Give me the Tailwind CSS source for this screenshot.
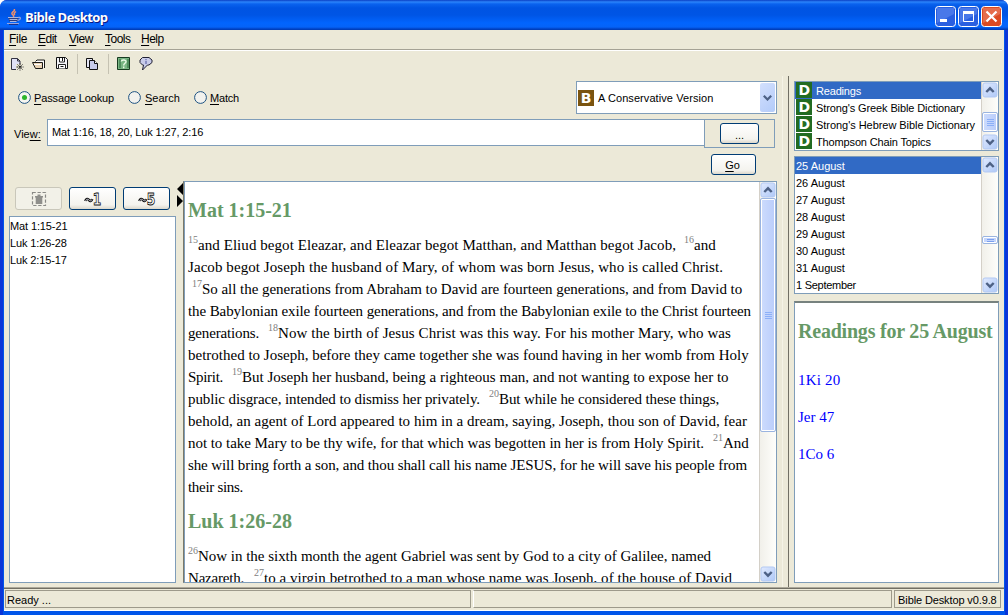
<!DOCTYPE html>
<html lang="en">
<head>
<meta charset="utf-8">
<title>Bible Desktop</title>
<script src="https://cdn.jsdelivr.net/npm/@tailwindcss/browser@4"></script>
</head>
<body class="w-[1008px] h-[615px] overflow-hidden bg-white text-black font-['Liberation_Sans',sans-serif] text-[11px] leading-[17px] whitespace-nowrap">
<svg class="absolute w-0 h-0">
  <defs>
    <linearGradient id="sb" x1="0" y1="0" x2="1" y2="1"><stop offset="0" stop-color="#e1eafe"/><stop offset="1" stop-color="#aec8f7"/></linearGradient>
    <symbol id="up" viewBox="0 0 16 16"><rect x="1" y="1" width="14" height="14" rx="2" fill="url(#sb)" stroke="#b3c9f3"/><path d="M4.300 10 8 6.300 11.700 10" fill="none" stroke="#4d6185" stroke-width="2.400"/></symbol>
    <symbol id="down" viewBox="0 0 16 16"><rect x="1" y="1" width="14" height="14" rx="2" fill="url(#sb)" stroke="#b3c9f3"/><path d="M4.300 6 8 9.700 11.700 6" fill="none" stroke="#4d6185" stroke-width="2.400"/></symbol>
    <symbol id="dict" viewBox="0 0 16 16"><path d="M0 0h16v16H0z" fill="#226b22"/><text x="8.300" y="13" text-anchor="middle" font-family="DejaVu Sans" font-weight="bold" font-size="14" fill="#fff">D</text></symbol>
  </defs>
</svg>
<div class="flex flex-col w-[1008px] h-[615px] rounded-t-[7px] overflow-hidden bg-[#0831d9]">
  <!-- title bar -->
  <header class="flex items-center shrink-0 h-[30px] pl-[6px] pr-[6px] bg-[linear-gradient(to_bottom,#0a3fc4_0,#2b84fb_2px,#0a62ee_4px,#0054e3_8px,#0055e5_15px,#0265fe_23px,#0563f8_27px,#0042c4_29px,#003ab0_30px)]">
    <svg class="w-4 h-4 mt-[3px]" viewBox="0 0 16 16" fill="none">
      <path d="M8 0c2 2-3 3-2 5 .5 1 2 1 1.500 3M10 2.500C8 4 7.500 5 9 6" stroke="#f0906a" stroke-width="1.500"/>
      <path d="M2 8h10.500l-1 4.500H3.500z" fill="#2c3c80"/>
      <path d="M2 8.500h10M3.500 10.500h8M4 12.500h6.500" stroke="#b9c3e8" stroke-width=".9"/>
      <path d="M12 8.500c3-1 3.500 2-.5 3M1 14.500h12" stroke="#97a3dc" stroke-width="1.200"/>
      <path d="M3 15.500h9" stroke="#1a2f88"/>
    </svg>
    <span class="ml-[3px] mt-[4px] font-bold text-[13px] leading-4 text-white font-['Open_Sans',sans-serif] tracking-[-0.56px] [text-shadow:1px_1px_0_#0a1883]">Bible Desktop</span>
    <div class="flex gap-[2px] ml-auto mt-[3px]">
      <svg class="w-[21px] h-[21px]" viewBox="0 0 21 21"><rect x=".5" y=".5" width="20" height="20" rx="3" fill="#2a5fe0" stroke="#fff"/><path d="M2 2h17v6L2 17z" fill="#6e97f3" opacity=".45"/><path d="M5 13h7v3H5z" fill="#fff"/></svg>
      <svg class="w-[21px] h-[21px]" viewBox="0 0 21 21"><rect x=".5" y=".5" width="20" height="20" rx="3" fill="#2a5fe0" stroke="#fff"/><path d="M2 2h17v6L2 17z" fill="#6e97f3" opacity=".45"/><path d="M5.500 6.500h10v9h-10z" fill="none" stroke="#fff"/><path d="M5 5h11v3H5z" fill="#fff"/></svg>
      <svg class="w-[21px] h-[21px]" viewBox="0 0 21 21"><rect x=".5" y=".5" width="20" height="20" rx="3" fill="#dc4a22" stroke="#fff"/><path d="M2 2h17v6L2 17z" fill="#f09a80" opacity=".45"/><path d="m5.500 5.500 10 10m0-10-10 10" stroke="#fff" stroke-width="2.200"/></svg>
    </div>
  </header>

  <div class="flex grow min-h-0 pl-px pr-px border-x-[3px] border-[#0a35d8] bg-[#0055ea]">
    <main class="flex flex-col w-full h-[581px] bg-[#ece9d8]">
      <!-- menu -->
      <nav class="flex shrink-0 h-[19px] items-center pl-[5px] text-[12px] tracking-[-0.5px]">
        <span class="w-[29px] tracking-[-0.3px]"><u class="underline-offset-2">F</u>ile</span><span class="w-[31px]"><u class="underline-offset-2">E</u>dit</span><span class="w-[36px]"><u class="underline-offset-2">V</u>iew</span><span class="w-[36px]"><u class="underline-offset-2">T</u>ools</span><span><u class="underline-offset-2">H</u>elp</span>
      </nav>
      <div class="shrink-0 h-[2px] border-t border-[#a5a295] bg-white mr-[2px]"></div>
      <!-- toolbar -->
      <div class="flex shrink-0 h-[25px] items-center pl-[5px]">
        <svg class="w-4 h-4" viewBox="0 0 16 16"><path d="M2.500 2.500h6l2.500 2.500v8.500H2.500z" fill="#dfe0f6" stroke="#333342"/><path d="M8.500 2.500V5H11" fill="none" stroke="#333342"/><path d="M7 8h8v7H7z" fill="#ece9d8"/><path d="M11 7.500v7M7.500 11h7M8.500 8.500l5 5m0-5-5 5" stroke="#222" stroke-dasharray="1.500 .6"/></svg>
        <svg class="ml-[6px] w-4 h-4" viewBox="0 0 16 16"><path d="M4.500 5.500 6 4h7.500v8" fill="#fff" stroke="#1b1b18"/><path d="M1.500 6.500h10v6H4.500z" fill="#e9d3b4" stroke="#1b1b18"/><path d="M3 8.500h7" stroke="#fff"/></svg>
        <svg class="ml-[7px] w-4 h-4" viewBox="0 0 16 16"><path d="M2.500 1.500h9l2 2v9h-11z" fill="#f4f4f8" stroke="#111"/><path d="M5.500 2v4h5V2M4.500 12.500v-4h7v4" fill="#fff" stroke="#222"/><path d="M8.500 2v3M6.500 10.500h3" stroke="#111"/></svg>
        <div class="ml-[7px] w-px h-5 bg-[#c5c2b2]"></div>
        <svg class="ml-[6px] w-4 h-4" viewBox="0 0 16 16"><path d="M2.500 2.500h6v9h-6z" fill="#e4e5f4" stroke="#111"/><path d="M5.500 4.500h5l3 3v6h-8z" fill="#c7cbea" stroke="#111"/><path d="M10.500 4.500v3h3" fill="#fff" stroke="#111"/></svg>
        <div class="ml-[8px] w-px h-5 bg-[#c5c2b2]"></div>
        <svg class="ml-[7px] w-4 h-4" viewBox="0 0 16 16"><path d="M1.500 1.500h12v12h-12z" fill="#79b583" stroke="#173c20"/><path d="M3 3h2v9H3zM11 3h2v9h-2z" fill="#4f8d5d"/><path d="M5.300 5.500c.2-2 4.900-2 4.700.3C9.900 7.300 7.700 7.500 7.700 9.500M7.700 10.500v1.800" fill="none" stroke="#e9f9e6" stroke-width="1.400"/></svg>
        <svg class="ml-[6px] w-4 h-4" viewBox="0 0 16 16"><path d="M4.500 1.500h6.500l3 2.500v2.500l-3 2.500H9.500L4.500 14l1-5h-1L2 6.500V4z" fill="#c8cbe9" stroke="#202033"/><path d="M8 3v1.200M8 5v3" stroke="#5e65a8" stroke-width="1.200"/></svg>
      </div>

      <div class="flex grow min-h-0">
        <!-- left half -->
        <section class="flex flex-col w-[776px] shrink-0">
          <div class="flex h-[43px] pt-[5px] pl-[14px] shrink-0">
            <div class="flex items-center h-[33px] grow">
              <svg class="w-[13px] h-[13px]" viewBox="0 0 13 13"><circle cx="6.500" cy="6.500" r="5.900" fill="#f6f6f1" stroke="#1d5281"/><circle cx="6.500" cy="6.500" r="2.500" fill="#2db52b"/></svg>
              <span class="ml-[3px] w-[94px] pt-px tracking-[-0.14px]"><u class="underline-offset-2">P</u>assage Lookup</span>
              <svg class="w-[13px] h-[13px]" viewBox="0 0 13 13"><circle cx="6.500" cy="6.500" r="5.900" fill="#f2f2ee" stroke="#1d5281"/></svg>
              <span class="ml-[4px] w-[49px] pt-px"><u class="underline-offset-2">S</u>earch</span>
              <svg class="w-[13px] h-[13px]" viewBox="0 0 13 13"><circle cx="6.500" cy="6.500" r="5.900" fill="#f2f2ee" stroke="#1d5281"/></svg>
              <span class="ml-[3px] pt-px tracking-[-0.19px]"><u class="underline-offset-2">M</u>atch</span>
            </div>
            <div class="flex items-center w-[201px] h-[33px] mr-[3px] border border-[#7f9db9] bg-white pl-px pr-px">
              <svg class="w-4 h-4" viewBox="0 0 16 16"><path d="M0 0h16v16H0z" fill="#7a5410"/><text x="8" y="13" text-anchor="middle" font-family="DejaVu Sans" font-weight="bold" font-size="14" fill="#fff">B</text></svg>
              <span class="ml-[4px] pt-px tracking-[0.076px]">A Conservative Version</span>
              <div class="flex items-center justify-center ml-auto w-[15px] h-[29px] rounded-[2px] bg-[linear-gradient(135deg,#d3e0fd,#b3cbf9)]"><svg class="w-[9px] h-[6px]" viewBox="0 0 9 6"><path d="M.8.8 4.500 4.500 8.200.8" fill="none" stroke="#4d6185" stroke-width="2.200"/></svg></div>
            </div>
          </div>
          <div class="flex h-[33px] shrink-0 pl-[10px]">
            <span class="w-[33px] pt-[7px]">Vie<u class="underline-offset-2">w:</u></span>
            <div class="w-[658px] h-[27px] border border-[#7f9db9] bg-white pl-[4px] pt-[4px] tracking-[-0.13px]">Mat 1:16, 18, 20, Luk 1:27, 2:16</div>
            <div class="-ml-px w-[71px] h-[29px] border border-[#7f9db9] pl-[15px] pt-[3px]">
              <div class="w-[39px] h-[21px] rounded-[3px] border border-[#003c74] bg-[linear-gradient(#fff,#f4f3ee_80%,#dcd8cc)] text-center leading-[22px]">...</div>
            </div>
          </div>
          <div class="h-[29px] shrink-0 pl-[707px] pt-[2px]">
            <div class="w-[45px] h-[21px] rounded-[3px] border border-[#003c74] bg-[linear-gradient(#fff,#f4f3ee_80%,#dcd8cc)] text-center leading-[21px] pr-[2px]"><u class="underline-offset-2">G</u>o</div>
          </div>
          <div class="flex h-[402px] shrink-0">
            <!-- passage list -->
            <div class="flex flex-col w-[172px] pl-[5px]">
              <div class="flex gap-[7px] h-[35px] pl-[6px] pt-[6px]">
                <div class="flex items-center justify-center w-[47px] h-[23px] rounded-[3px] border border-[#c9c7ba] bg-[#f2f1e8]"><svg class="w-4 h-4" viewBox="0 0 16 16"><path d="M1.500 1.500h13v13h-13z" fill="none" stroke="#8a8a86" stroke-width="1.200" stroke-dasharray="3.300 1.700"/><path d="M4 5h8v1.500h-.7V13H4.700V6.500H4zM6.500 3.500h3V5h-3z" fill="#8f8f8b"/></svg></div>
                <div class="flex items-center justify-center w-[47px] h-[23px] rounded-[3px] border border-[#003c74] bg-[linear-gradient(#fff,#f4f3ee_80%,#dcd8cc)]"><svg class="w-[18px] h-4" viewBox="0 0 18 16"><path d="M1.300 10C2 7.500 4 7.500 5 9s2.500 1.500 3.200-1" fill="none" stroke="#111" stroke-width="2.600"/><path d="M1.500 9.800C2.500 7.800 4 8 5 9s2.300 1.300 3-.5" fill="none" stroke="#e5e5f5" stroke-width=".8"/><text x="8.700" y="14" font-family="DejaVu Sans" font-weight="bold" font-size="16" textLength="8.500" lengthAdjust="spacingAndGlyphs" fill="#fff" stroke="#111" stroke-width=".9">1</text></svg></div>
                <div class="flex items-center justify-center w-[47px] h-[23px] rounded-[3px] border border-[#003c74] bg-[linear-gradient(#fff,#f4f3ee_80%,#dcd8cc)]"><svg class="w-[18px] h-4" viewBox="0 0 18 16"><path d="M1.300 10C2 7.500 4 7.500 5 9s2.500 1.500 3.200-1" fill="none" stroke="#111" stroke-width="2.600"/><path d="M1.500 9.800C2.500 7.800 4 8 5 9s2.300 1.300 3-.5" fill="none" stroke="#e5e5f5" stroke-width=".8"/><text x="8.700" y="14" font-family="DejaVu Sans" font-weight="bold" font-size="16" textLength="8.500" lengthAdjust="spacingAndGlyphs" fill="#fff" stroke="#111" stroke-width=".9">5</text></svg></div>
              </div>
              <div class="w-[167px] h-[367px] border border-[#7f9db9] bg-white pt-px tracking-[-0.12px]"><div>Mat 1:15-21</div><div>Luk 1:26-28</div><div>Luk 2:15-17</div></div>
            </div>
            <div class="w-[7px] pt-[2px]"><svg class="w-[7px] h-6" viewBox="0 0 7 24"><path d="M7 0v12L1 6zM1 12v12l6-6z"/></svg></div>
            <!-- passage text -->
            <div class="flex w-[594px] border border-[#7f9db9] border-l-[#7a7868] bg-white overflow-hidden">
              <div class="w-px bg-[#7f9db9]"></div>
              <article class="w-[574px] h-[400px] shrink-0 pl-[3px] font-['Liberation_Serif',serif] text-[15px] leading-[22px] overflow-hidden">
                <h2 class="mt-4 h-9 font-bold text-[20px] leading-6 text-[#669966]">Mat 1:15-21</h2>
                <div class="flex h-[22px]"><span class="w-[10px] text-[10px] leading-[11px] text-[#808080]">15</span><span class="w-[486px] tracking-[0.061px]">and Eliud begot Eleazar, and Eleazar begot Matthan, and Matthan begot Jacob,</span><span class="w-[10px] text-[10px] leading-[11px] text-[#808080]">16</span><span>and</span></div>
                <div class="h-[22px] tracking-[0.071px]">Jacob begot Joseph the husband of Mary, of whom was born Jesus, who is called Christ.</div>
                <div class="flex h-[22px] pl-[4px]"><span class="w-[10px] text-[10px] leading-[11px] text-[#808080]">17</span><span class="tracking-[-0.039px]">So all the generations from Abraham to David are fourteen generations, and from David to</span></div>
                <div class="h-[22px] tracking-[-0.098px]">the Babylonian exile fourteen generations, and from the Babylonian exile to the Christ fourteen</div>
                <div class="flex h-[22px]"><span class="w-[80px] tracking-[-0.158px]">generations.</span><span class="w-[10px] text-[10px] leading-[11px] text-[#808080]">18</span><span class="tracking-[0.081px]">Now the birth of Jesus Christ was this way. For his mother Mary, who was</span></div>
                <div class="h-[22px]">betrothed to Joseph, before they came together she was found having in her womb from Holy</div>
                <div class="flex h-[22px]"><span class="w-[44px] tracking-[-0.3px]">Spirit.</span><span class="w-[10px] text-[10px] leading-[11px] text-[#808080]">19</span><span>But Joseph her husband, being a righteous man, and not wanting to expose her to</span></div>
                <div class="flex h-[22px]"><span class="w-[301px] tracking-[-0.104px]">public disgrace, intended to dismiss her privately.</span><span class="w-[10px] text-[10px] leading-[11px] text-[#808080]">20</span><span class="tracking-[-0.111px]">But while he considered these things,</span></div>
                <div class="h-[22px] tracking-[0.027px]">behold, an agent of Lord appeared to him in a dream, saying, Joseph, thou son of David, fear</div>
                <div class="flex h-[22px]"><span class="w-[525px] tracking-[-0.044px]">not to take Mary to be thy wife, for that which was begotten in her is from Holy Spirit.</span><span class="w-[10px] text-[10px] leading-[11px] text-[#808080]">21</span><span>And</span></div>
                <div class="h-[22px] tracking-[-0.109px]">she will bring forth a son, and thou shall call his name JESUS, for he will save his people from</div>
                <div class="h-[22px] tracking-[-0.3px]">their sins.</div>
                <h2 class="mt-[11px] h-9 font-bold text-[20px] leading-6 text-[#669966]">Luk 1:26-28</h2>
                <div class="flex h-[22px]"><span class="w-[10px] text-[10px] leading-[11px] text-[#808080]">26</span><span class="tracking-[-0.022px]">Now in the sixth month the agent Gabriel was sent by God to a city of Galilee, named</span></div>
                <div class="flex h-[22px]"><span class="w-[66px] tracking-[-0.2px]">Nazareth.</span><span class="w-[10px] text-[10px] leading-[11px] text-[#808080]">27</span><span class="tracking-[0.045px]">to a virgin betrothed to a man whose name was Joseph, of the house of David</span></div>
              </article>
              <div class="flex flex-col w-[17px] h-[400px] border-l border-[#d4d0c8] bg-[linear-gradient(to_right,#f1f0ea,#fefefb)]">
                <svg class="w-4 h-4 shrink-0"><use href="#up"/></svg>
                <div class="flex flex-col gap-px items-center justify-center w-4 h-[234px] rounded-[2px] border border-[#9ab4e0] bg-[linear-gradient(to_right,#cddcfd,#bacdfb)] shadow-[inset_0_0_0_1px_#fff]">
                  <div class="w-[7px] h-px bg-[#8cb0f8]"></div><div class="w-[7px] h-px bg-[#8cb0f8]"></div><div class="w-[7px] h-px bg-[#8cb0f8]"></div><div class="w-[7px] h-px bg-[#8cb0f8]"></div>
                </div>
                <svg class="w-4 h-4 shrink-0 mt-auto"><use href="#down"/></svg>
              </div>
            </div>
          </div>
        </section>
        <!-- split bar -->
        <div class="w-[9px] shrink-0 border-r border-[#716f64] flex"><div class="ml-[2px] w-px bg-[#f5f3e6]"></div></div>
        <!-- right half -->
        <section class="flex flex-col w-[210px] shrink-0 ml-[5px] pt-[5px]">
          <div class="flex w-[205px] h-[70px] border border-[#7f9db9] bg-white overflow-hidden">
            <ul class="w-[186px] shrink-0">
              <li class="flex h-[17px] bg-[#316ac5] text-white pl-px leading-[18px]"><svg class="w-4 h-4"><use href="#dict"/></svg><span class="ml-[4px] tracking-[-0.18px]">Readings</span></li>
              <li class="flex h-[17px] pl-px leading-[18px]"><svg class="w-4 h-4"><use href="#dict"/></svg><span class="ml-[4px] tracking-[-0.113px]">Strong's Greek Bible Dictionary</span></li>
              <li class="flex h-[17px] pl-px leading-[18px]"><svg class="w-4 h-4"><use href="#dict"/></svg><span class="ml-[4px] tracking-[-0.045px]">Strong's Hebrew Bible Dictionary</span></li>
              <li class="flex h-[17px] pl-px leading-[18px]"><svg class="w-4 h-4"><use href="#dict"/></svg><span class="ml-[4px] tracking-[-0.143px]">Thompson Chain Topics</span></li>
            </ul>
            <div class="flex flex-col w-[17px] h-[68px] border-l border-[#d4d0c8] bg-[linear-gradient(to_right,#f1f0ea,#fefefb)]">
              <svg class="w-4 h-4 shrink-0"><use href="#up"/></svg>
              <div class="flex flex-col gap-px items-center justify-center w-4 h-[20px] mt-[14px] rounded-[2px] border border-[#9ab4e0] bg-[linear-gradient(to_right,#cddcfd,#bacdfb)] shadow-[inset_0_0_0_1px_#fff]"><div class="w-[7px] h-px bg-[#8cb0f8]"></div><div class="w-[7px] h-px bg-[#8cb0f8]"></div><div class="w-[7px] h-px bg-[#8cb0f8]"></div><div class="w-[7px] h-px bg-[#8cb0f8]"></div></div>
              <svg class="w-4 h-4 shrink-0 mt-auto"><use href="#down"/></svg>
            </div>
          </div>
          <div class="flex w-[205px] h-[138px] mt-[5px] border border-[#7f9db9] bg-white overflow-hidden">
            <ul class="w-[186px] shrink-0">
              <li class="h-[17px] leading-[18px] bg-[#316ac5] text-white pl-px">25 August</li><li class="h-[17px] leading-[18px] pl-px">26 August</li><li class="h-[17px] leading-[18px] pl-px">27 August</li><li class="h-[17px] leading-[18px] pl-px">28 August</li><li class="h-[17px] leading-[18px] pl-px">29 August</li><li class="h-[17px] leading-[18px] pl-px">30 August</li><li class="h-[17px] leading-[18px] pl-px">31 August</li><li class="h-[17px] leading-[18px] pl-px tracking-[-0.27px]">1 September</li>
            </ul>
            <div class="flex flex-col w-[17px] h-[136px] border-l border-[#d4d0c8] bg-[linear-gradient(to_right,#f1f0ea,#fefefb)]">
              <svg class="w-4 h-4 shrink-0"><use href="#up"/></svg>
              <div class="flex flex-col gap-px items-center justify-center w-4 h-[8px] mt-[63px] rounded-[2px] border border-[#9ab4e0] bg-[#c4d5fc] shadow-[inset_0_0_0_1px_#fff]"><div class="w-[7px] h-px bg-[#7ba0ee]"></div><div class="w-[7px] h-px bg-[#7ba0ee]"></div></div>
              <svg class="w-4 h-4 shrink-0 mt-auto"><use href="#down"/></svg>
            </div>
          </div>
          <div class="w-[205px] h-[282px] mt-[7px] border border-t-2 border-[#7f9db9] border-t-[#77827f] bg-white pl-[3px] font-['Liberation_Serif',serif] text-[15px] leading-[37px] text-[#0000ff]">
            <h2 class="mt-4 mb-[19px] h-6 font-bold text-[20px] leading-6 text-[#669966] tracking-[-0.21px]">Readings for 25 August</h2>
            <div class="h-[37px] tracking-[0.2px]">1Ki 20</div><div class="h-[37px]">Jer 47</div><div class="h-[37px]">1Co 6</div>
          </div>
        </section>
      </div>

      <!-- status bar -->
      <footer class="flex flex-col shrink-0 h-[24px]">
        <div class="h-[2px] border-b border-[#716f64] bg-[#aca899]"></div>
        <div class="flex gap-[2px] h-[22px] pt-px pl-px pb-[2px] pr-[3px] border-b border-white">
          <div class="w-[466px] border border-[#9d9a8b] pl-px leading-[18px]">Ready ...</div>
          <div class="w-[420px] border border-[#9d9a8b] border-l-white"></div>
          <div class="w-[107px] border border-[#9d9a8b] pl-[3px] leading-[18px] tracking-[-0.12px]">Bible Desktop v0.9.8</div>
        </div>
      </footer>
    </main>
  </div>
</div>
</body>
</html>
